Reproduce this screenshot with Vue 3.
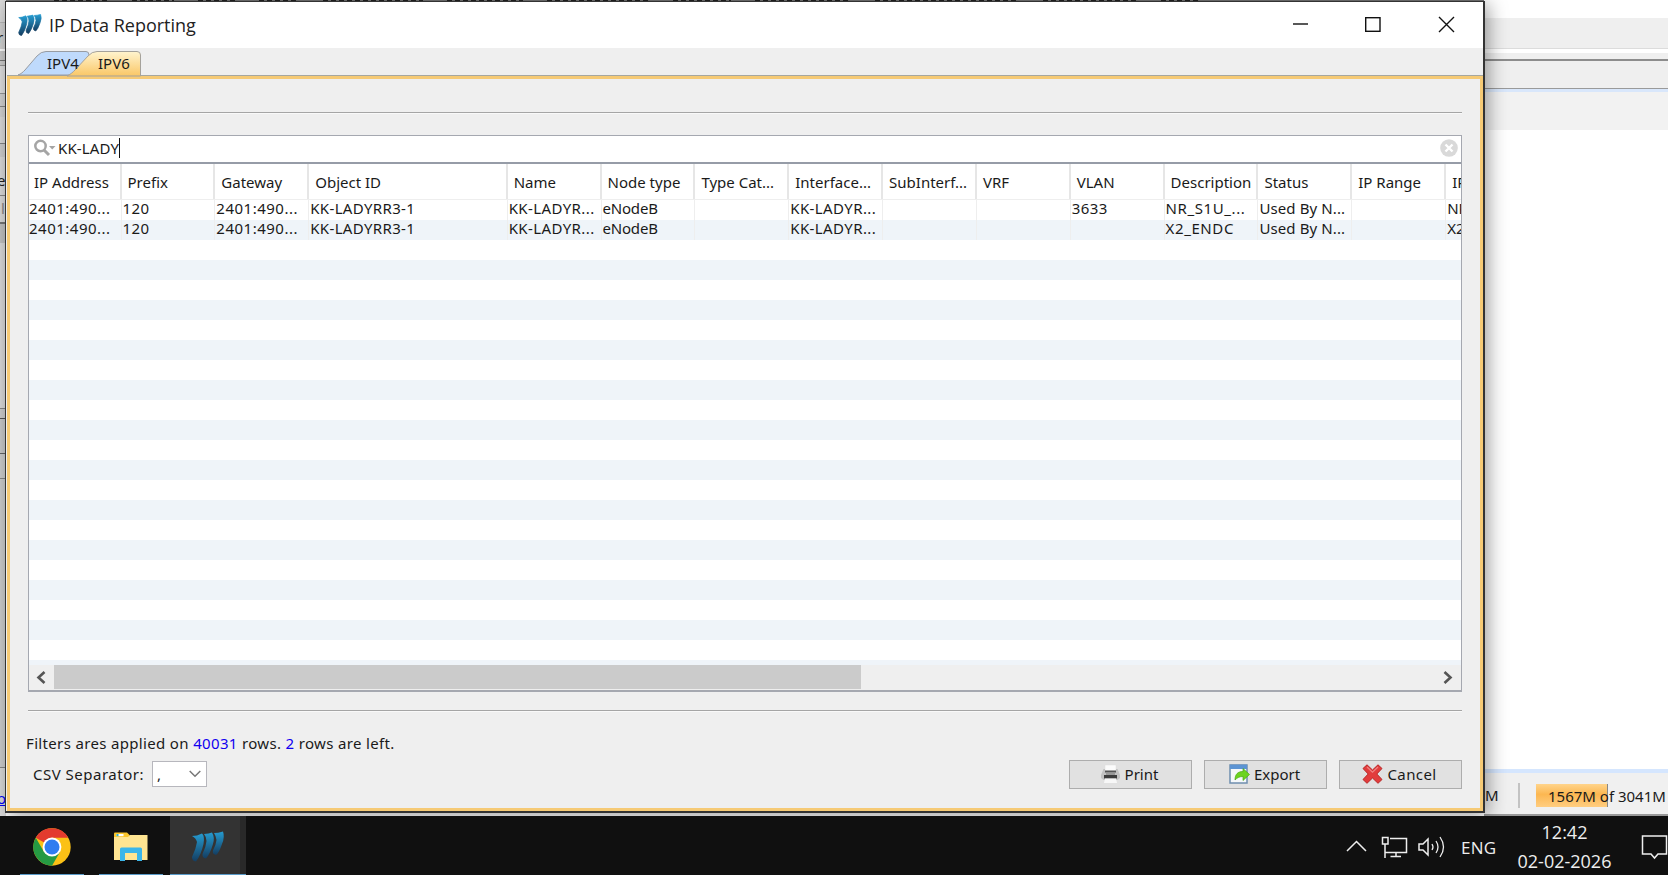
<template>
    <div class="desktop">
        <div class="backdrop">
            <div class="menu-edge">
                <i v-for="(w, i) in menuWords" :key="i" :style="{ width: w + 'px' }"></i>
            </div>

            <!-- parts of the main window left of the dialog -->
            <div class="left-strip">
                <span class="bit bit-r">r</span>
                <span class="bit bit-e">e</span>
                <span class="bit bit-l">l</span>
                <span class="bit bit-o">o</span>
            </div>

            <div class="right-strip">
                <div class="main-top"></div>
                <div class="main-body"></div>
                <div class="status">
                    <span class="status-m">M</span>
                    <span class="status-line"></span>
                    <div class="memory"><span class="t">1567M of 3041M</span></div>
                </div>
            </div>
        </div>

        <div class="dialog">
            <div class="titlebar">
                <svg class="app-icon" width="24" height="22" viewBox="0 0 34 31">
                    <defs>
                        <linearGradient id="mg" x1="0" y1="0" x2="0" y2="1">
                            <stop offset="0" stop-color="#259bd0" />
                            <stop offset="1" stop-color="#143d61" />
                        </linearGradient>
                    </defs>
                    <path v-for="p in logoPaths" :key="p" :d="p" fill="url(#mg)" stroke="url(#mg)" />
                </svg>
                <h1>IP Data Reporting</h1>
                <svg class="win-buttons" width="170" height="46" viewBox="0 0 170 46">
                    <g fill="none" stroke="#111" stroke-width="1.4">
                        <path d="M3 22H18" />
                        <rect x="75.7" y="15.7" width="14.3" height="13.6" />
                        <path d="M149 15L164 30M164 15L149 30" />
                    </g>
                </svg>
            </div>

            <div class="tabs">
                <svg class="tab-shapes" width="126" height="28" viewBox="0 0 126 28">
                    <defs>
                        <linearGradient id="tab" x1="0" y1="0" x2="0" y2="1">
                            <stop offset="0" stop-color="#fff4cf" />
                            <stop offset="1" stop-color="#fac766" />
                        </linearGradient>
                    </defs>
                    <path d="M-1 27C2 26 4 24 6 22L18 8Q22 3.500 27 3.500H67Q70 3.500 70 7V27Z" fill="#bfdafc" stroke="#989ca2" />
                    <path d="M48 28C52 26 54 24 56 22L69 8Q73 3.500 78 3.500H118Q121.500 3.500 121.500 7V28Z" fill="url(#tab)" stroke="#a5a29b" />
                </svg>
                <span class="tab-name first t">IPV4</span>
                <span class="tab-name second t">IPV6</span>
            </div>

            <div class="content">
                <hr class="rule" />

                <div class="grid-box">
                    <div class="search">
                        <svg width="23" height="18" viewBox="0 0 23 18">
                            <circle cx="6.500" cy="7" r="5.200" fill="none" stroke="#a5a5a5" stroke-width="2.500" />
                            <path d="M10 11L15 16" stroke="#a5a5a5" stroke-width="3" />
                            <path d="M15 7H21.500L18.200 10.500Z" fill="#a5a5a5" />
                        </svg>
                        <span class="query t">KK-LADY</span>
                        <span class="caret"></span>
                        <svg class="clear" width="18" height="18" viewBox="0 0 18 18">
                            <circle cx="9" cy="9" r="8.800" fill="#d9d9d9" />
                            <path d="M5.500 5.500L12.500 12.500M12.500 5.500L5.500 12.500" stroke="#fff" stroke-width="2.400" />
                        </svg>
                    </div>

                    <div class="table">
                        <div class="row head">
                            <div v-for="c in columns" :key="c.name" class="cell" :class="{ wide: c.wide }"><span class="t">{{ c.name }}</span></div>
                        </div>
                        <div v-for="(r, i) in rows" :key="i" class="row data">
                            <div v-for="(c, j) in columns" :key="j" class="cell" :class="{ wide: c.wide }" :style="{ letterSpacing: (c.spacing || 0) + 'px' }"><span class="t">{{ r[j] }}</span></div>
                        </div>
                        <div class="empty"></div>
                    </div>

                    <div class="scrollbar">
                        <svg width="25" height="25" viewBox="0 0 25 25"><path d="M15.500 7L9.500 12.500L15.500 18" fill="none" stroke="#555" stroke-width="2.600" /></svg>
                        <div class="thumb"></div>
                        <svg class="right" width="26" height="25" viewBox="0 0 26 25"><path d="M9.500 7L15.500 12.500L9.500 18" fill="none" stroke="#555" stroke-width="2.600" /></svg>
                    </div>
                </div>

                <hr class="rule low" />

                <p class="summary t">Filters ares applied on <b>40031</b> rows. <b>2</b> rows are left.</p>

                <div class="footer">
                    <label class="t">CSV Separator:</label>
                    <div class="combo">
                        <span>,</span>
                        <svg width="12" height="8" viewBox="0 0 12 8"><path d="M.7 1L6 6.300L11.300 1" fill="none" stroke="#777" stroke-width="1.500" /></svg>
                    </div>
                    <div class="buttons">
                        <button>
                            <svg width="20" height="20" viewBox="0 0 20 20">
                                <path d="M4 1H15V7H4Z" fill="#fbfbfb" stroke="#ddd" stroke-width=".5" />
                                <path d="M2.500 5H4V8H15V5H16.500L19 11V14L16.500 16H2.500L0 14V11Z" fill="#c2c2c2" />
                                <path d="M4 6.500H15V8.500H4Z" fill="#555" />
                                <path d="M5 8.500H14V11H5Z" fill="#999" />
                                <path d="M3 11H16V14.500H3Z" fill="#3c3c3c" />
                                <path d="M4 14.500H15L16 19H3Z" fill="#f7f7f7" />
                            </svg>
                            <span class="t">Print</span>
                        </button>
                        <button>
                            <svg width="21" height="20" viewBox="0 0 21 20">
                                <rect x="1" y="1" width="17" height="18" fill="#f5f8fa" stroke="#6f8eae" stroke-width="1.500" />
                                <path d="M1 .7H18V5H1Z" fill="#5b93d3" />
                                <path d="M6 16C6 10 9 7.500 14 7.500V4.500L20.500 10.500L14 16.500V12.500C10 12.500 8 14 6 16Z" fill="#6cd31f" stroke="#4ca813" stroke-width=".7" />
                            </svg>
                            <span class="t">Export</span>
                        </button>
                        <button>
                            <svg width="21" height="20" viewBox="0 0 21 20">
                                <path d="M5 .8L10.500 6L16 .8L20 4.500L14.800 10L20 15.500L16 19.300L10.500 14L5 19.300L1 15.500L6.200 10L1 4.500Z" fill="#e23c3c" stroke="#b82727" stroke-linejoin="round" />
                                <path d="M5 3L10.500 8.200L16 3" fill="none" stroke="#f08080" stroke-width="1.300" />
                            </svg>
                            <span class="cancel t">Cancel</span>
                        </button>
                    </div>
                </div>
            </div>
        </div>

        <div class="taskbar">
            <div class="task chrome">
                <svg width="38" height="38" viewBox="0 0 38 38">
                    <circle cx="19" cy="19" r="18.700" fill="#fbc116" />
                    <path d="M19 19L2.800 9.650A18.700 18.700 0 0 1 35.200 9.650H19Z" fill="#e33b2e" />
                    <path d="M2.800 9.650A18.700 18.700 0 0 0 19 37.700L27.100 23.700L19 19L10.900 23.700Z" fill="#259a43" />
                    <circle cx="19" cy="19" r="9.400" fill="#fff" />
                    <circle cx="19" cy="19" r="7.500" fill="#2f7df0" />
                </svg>
            </div>
            <div class="task folder">
                <svg width="36" height="30" viewBox="0 0 36 30">
                    <path d="M1 1.500Q1 .5 2 .5H14L17 3.500V7H1Z" fill="#fbc62c" />
                    <rect x="3.500" y="2" width="7" height="2.200" fill="#fff" />
                    <rect x="3.500" y="2" width="2" height="2.200" fill="#35b1c5" />
                    <path d="M1 5H15L17 3H34.500V28H1Z" fill="#ffe592" />
                    <path d="M7 29V17Q7 15.500 8.500 15.500H27.500Q29 15.500 29 17V29H24V21H12V29Z" fill="#3bb6ea" />
                </svg>
            </div>
            <div class="task active">
                <svg width="34" height="31" viewBox="0 0 34 31">
                    <path v-for="p in logoPaths" :key="p" :d="p" fill="url(#mg)" />
                </svg>
            </div>
            <div class="tray">
                <svg width="105" height="26" viewBox="0 0 105 26">
                    <g fill="none" stroke="#eee" stroke-width="1.500">
                        <path d="M2 17L11.500 7.500L21 17" />
                        <path d="M45 4.500H61.500V18.500H40M51 18.500V22.500M45.500 22.500H56" />
                        <path d="M37.500 3.500H43V10H37.500ZM40 10V24" />
                        <path d="M74 10H78L83 5V21L78 16H74Z" />
                        <path d="M87 10Q89 13 87 16M91 7Q95 13 91 19M95 3Q102 13 95 23" stroke-width="1.300" />
                    </g>
                </svg>
                <span class="lang">ENG</span>
                <div class="clock"><span>12:42</span><span>02-02-2026</span></div>
                <svg class="note" width="27" height="26" viewBox="0 0 27 26"><path d="M1.500 2H25.500V20H17L13.500 24L10 20H1.500Z" fill="none" stroke="#eee" stroke-width="1.500" /></svg>
            </div>
        </div>
    </div>
</template>


<script setup>
const logoPaths = [
    'M1 5Q6 5 11 2.500Q14 5 12.500 13Q10 24 5 30.500Q1 30 1 26Q5 18 6 11Q5 7 1 5Z',
    'M13 3Q18 2.500 21 1.500Q24 6 22 13Q19 23 15 27.500Q11 27 11.500 23Q15 16 15.500 10Q15.500 6 13 3Z',
    'M23 2Q27 2 32 .5Q34 6 31 13Q28 22 25 24Q21 23 22 19.500Q25 14 25.500 9Q25 5 23 2Z'
];

// lengths of the menu words still visible above the dialog
const menuWords = [54, 42, 37, 40, 100, 76, 102, 58, 96, 144, 94, 38];

// spacing is the letter spacing of the data cells
const columns = [
    { name: 'IP Address', spacing: 0.5 },
    { name: 'Prefix', spacing: 0.4 },
    { name: 'Gateway', spacing: 0.5 },
    { name: 'Object ID', wide: true, spacing: 0.35 },
    { name: 'Name', spacing: 0.4 },
    { name: 'Node type', spacing: -0.2 },
    { name: 'Type Cat...' },
    { name: 'Interface...', spacing: 0.4 },
    { name: 'SubInterf...' },
    { name: 'VRF' },
    { name: 'VLAN', spacing: 0.4 },
    { name: 'Description', spacing: 0.6 },
    { name: 'Status', spacing: 0.1 },
    { name: 'IP Range' },
    { name: 'IP' }
];

const rows = [
    ['2401:490...', '120', '2401:490...', 'KK-LADYRR3-1', 'KK-LADYR...', 'eNodeB', '', 'KK-LADYR...', '', '', '3633', 'NR_S1U_...', 'Used By N...', '', 'NR'],
    ['2401:490...', '120', '2401:490...', 'KK-LADYRR3-1', 'KK-LADYR...', 'eNodeB', '', 'KK-LADYR...', '', '', '', 'X2_ENDC', 'Used By N...', '', 'X2']
];
</script>

<style>
body{
    margin: 0;
    overflow: hidden;
}
</style>

<style scoped>
*{
    box-sizing: border-box;
}

.desktop{
    position: relative;
    width: 1668px;
    height: 875px;
    overflow: hidden;
    background: #fff;
    color: #1a1a1a;
    font-family: "Noto Sans", "DejaVu Sans", sans-serif;
    font-size: 15px;
    display: flex;
    flex-direction: column;
}

.t{
    white-space: nowrap;
}

.backdrop{
    height: 816px;
    flex: none;
    display: flex;
    justify-content: space-between;
    background: #fff;
}

.menu-edge{
    position: absolute;
    top: 0;
    left: 0;
    width: 1484px;
    height: 1px;
    padding-left: 54px;
    display: flex;
    gap: 24px;
    background: #777;
}

.menu-edge i{
    height: 1px;
    background: repeating-linear-gradient(90deg, #222 0 5px, #777 5px 8px);
}

.left-strip{
    position: relative;
    width: 6px;
    overflow: hidden;
    background: linear-gradient(#dcdcdc 0 22px, #bbb 22px 23px, #d4d4d4 23px 49px, #fff 49px 51px, #ccc 51px 60px, #777 60px 61px, #d0d0d0 61px 65px, #999 65px 66px, #e2e2e2 66px 93px, #999 93px 94px, #d4d4d4 94px 106px, #888 106px 107px, #d4d4d4 107px 117px, #ddd 117px 143px, #888 143px 144px, #d0d0d0 144px 157px, #ddd 157px 195px, #888 195px 196px, #ddd 196px 222px, #777 222px 224px, #c4c4c4 224px 243px, #ddd 243px 408px, #888 408px 409px, #d0d0d0 409px 418px, #555 418px 419px, #ccc 419px 453px, #666 453px 454px, #d0d0d0 454px 478px, #888 478px 479px, #d0d0d0 479px 767px, #888 767px 768px, #dcdcdc 768px);
}

.bit{
    position: absolute;
    left: -3px;
    line-height: 18px;
    color: #222;
}

.bit-r{ top: 28px; }
.bit-e{ top: 171px; }
.bit-l{ top: 199px; left: 1px; color: #888; }
.bit-o{ top: 789px; color: #00f; text-decoration: underline; }

.right-strip{
    width: 184px;
    display: flex;
    flex-direction: column;
}

.main-top{
    height: 130px;
    background: linear-gradient(#fff 0 18px, #efefef 18px 48px, #dcdcdc 48px 49px, #fff 49px 53px, #efefef 53px 59px, #8c8c8c 59px 61px, #efefef 61px 88px, #9a9a9a 88px 89px, #d9e7fb 89px 92px, #f2f2f2 92px);
}

.main-body{
    flex: 1;
}

.status{
    height: 47px;
    display: flex;
    align-items: center;
    padding-top: 3px;
    border-top: 4px solid #d5e6fe;
    border-bottom: 2px solid #999;
    background: #f0f0f0;
}

.status-m{
    width: 15px;
    margin-left: 1px;
}

.status-line{
    width: 2px;
    height: 25px;
    margin: 0 16px 0 18px;
    background: #c3c3c3;
}

.memory{
    width: 132px;
    height: 23px;
    padding-left: 12px;
    line-height: 24px;
    background: linear-gradient(90deg, transparent 71px, #888 71px 72px, #f0f0f0 72px), linear-gradient(#ffd48b, #fcb751 45%, #ffcd80);
}

.dialog{
    position: absolute;
    left: 5px;
    top: 1px;
    width: 1480px;
    height: 812px;
    display: flex;
    flex-direction: column;
    border: 1px solid #333;
    border-right-width: 2px;
    border-bottom-width: 2px;
    background: #efefef;
    box-shadow: 3px 3px 18px rgba(0, 0, 0, .4);
}

.titlebar{
    height: 46px;
    display: flex;
    align-items: center;
    background: #fff;
}

.app-icon{
    margin: -1px 7px 0 12px;
}

h1{
    margin: 0;
    font: 400 18px "Open Sans", sans-serif;
    color: #222;
}

.win-buttons{
    margin-left: auto;
    margin-right: 23px;
}

.tabs{
    position: relative;
    height: 28px;
    flex: none;
    padding-left: 12px;
}

.tab-shapes{
    display: block;
    width: 126px;
    margin-left: 1px;
    overflow: visible;
}

.tab-name{
    position: absolute;
    top: 5px;
    line-height: 21px;
}

.first{ left: 41px; }
.second{ left: 92px; }

.content{
    flex: 1;
    margin-left: 1px;
    padding: 33px 18px 0 18px;
    border: 3px solid #f6ca75;
    box-shadow: 0 -1px 0 #a6a79f;
    display: flex;
    flex-direction: column;
}

.rule{
    width: 100%;
    height: 2px;
    flex: none;
    margin: 0;
    border: 0;
    border-top: 1px solid #a5a5a5;
    background: #f9f9f9;
}

.grid-box{
    height: 557px;
    flex: none;
    margin-top: 21px;
    border: 1px solid #a5a8b0;
    border-bottom-width: 2px;
    display: flex;
    flex-direction: column;
    background: #fff;
    overflow: hidden;
}

.search{
    height: 28px;
    flex: none;
    display: flex;
    align-items: center;
    padding: 0 3px 2px 5px;
    border-bottom: 2px solid #969ca7;
}

.query{
    margin-left: 1px;
    letter-spacing: .15px;
}

.caret{
    width: 1px;
    height: 20px;
    background: #111;
}

.clear{
    margin-left: auto;
}

.table{
    flex: 1;
    display: flex;
    flex-direction: column;
    overflow: hidden;
}

.row{
    display: flex;
    height: 20px;
    flex: none;
}

.cell{
    width: 93.85px;
    flex: none;
    padding-left: 1px;
    line-height: 17px;
    overflow: hidden;
    border-right: 1px solid #eee;
}

.cell:first-child{
    width: 92.5px;
    padding-left: 0;
}

.cell.wide{
    width: 198.5px;
}

.row.head{
    height: 36px;
    border-bottom: 1px solid #eee;
}

.head .cell{
    padding-left: 6px;
    line-height: 37px;
    border-right: 2px solid #e6e6e6;
}

.head .cell:first-child{
    padding-left: 5px;
}

.data:nth-child(3){
    background: #eff4f9;
}

.empty{
    flex: 1;
    background: repeating-linear-gradient(#fff 0 20px, #eff4f9 20px 40px);
}

.scrollbar{
    height: 25px;
    flex: none;
    display: flex;
    background: #efefef;
}

.thumb{
    width: 807px;
    height: 24px;
    background: #cbcbcb;
}

.right{
    margin-left: auto;
}

.rule.low{
    margin-top: 18px;
}

.summary{
    margin: 20px 0 0 -2px;
    line-height: 22px;
    letter-spacing: .34px;
}

.summary b{
    font-weight: 400;
    color: #1100f0;
}

.footer{
    height: 30px;
    margin-top: 5px;
    display: flex;
    align-items: center;
}

label{
    width: 119px;
    margin-left: 5px;
    letter-spacing: .5px;
}

.combo{
    width: 55px;
    height: 26px;
    padding: 0 5px 0 4px;
    display: flex;
    align-items: center;
    justify-content: space-between;
    border: 1px solid #b7b7bd;
    background: #fff;
}

.buttons{
    margin-left: auto;
    display: flex;
    gap: 12px;
}

button{
    width: 123px;
    height: 29px;
    padding: 0 2px 0 0;
    display: flex;
    align-items: center;
    justify-content: center;
    gap: 4px;
    border: 1px solid #adadad;
    background: #e1e1e1;
    color: #1a1a1a;
    font: inherit;
}

.cancel{
    letter-spacing: .4px;
}

.taskbar{
    position: relative;
    height: 59px;
    flex: none;
    display: flex;
    background: #101010;
    color: #eee;
    font-family: "Open Sans", sans-serif;
    font-size: 17px;
}

.task{
    height: 59px;
    padding-top: 3px;
    display: flex;
    align-items: center;
    justify-content: center;
    border-bottom: 1px solid #5a9bc9;
}

.chrome{
    width: 64px;
    margin-left: 20px;
}

.folder{
    width: 64px;
    margin: 0 7px 0 15px;
}

.active{
    width: 76px;
    background: linear-gradient(90deg, #333 70px, #292929 70px);
}

.tray{
    margin-left: auto;
    padding-top: 3px;
    display: flex;
    align-items: center;
}

.lang{
    width: 53px;
    margin-left: 11px;
    letter-spacing: .3px;
}

.clock{
    width: 101px;
    margin-right: 26px;
    display: flex;
    flex-direction: column;
    align-items: center;
    font-size: 18px;
    line-height: 29px;
}
</style>
